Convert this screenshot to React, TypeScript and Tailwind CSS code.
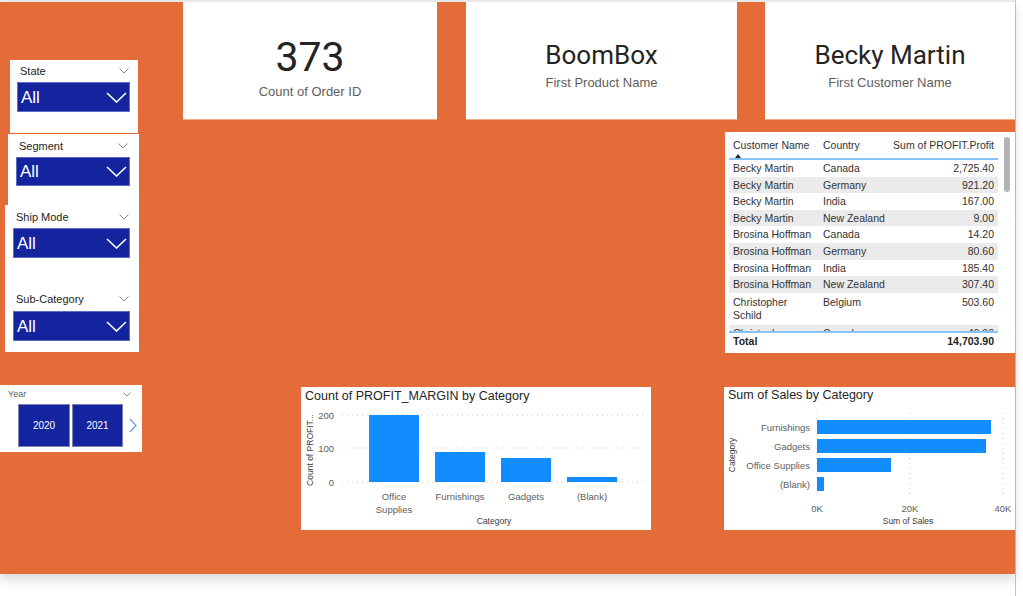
import React from "react";

const sans = "font-['Liberation_Sans',Arial,sans-serif]";
const svgFont = "Liberation Sans, Arial, sans-serif";

const tableRows: { name: string[]; country: string; profit: string }[] = [
  { name: ["Becky Martin"], country: "Canada", profit: "2,725.40" },
  { name: ["Becky Martin"], country: "Germany", profit: "921.20" },
  { name: ["Becky Martin"], country: "India", profit: "167.00" },
  { name: ["Becky Martin"], country: "New Zealand", profit: "9.00" },
  { name: ["Brosina Hoffman"], country: "Canada", profit: "14.20" },
  { name: ["Brosina Hoffman"], country: "Germany", profit: "80.60" },
  { name: ["Brosina Hoffman"], country: "India", profit: "185.40" },
  { name: ["Brosina Hoffman"], country: "New Zealand", profit: "307.40" },
  { name: ["Christopher", "Schild"], country: "Belgium", profit: "503.60" },
  { name: ["Christopher"], country: "Canada", profit: "40.00" },
];

function SmallChevron() {
  return (
    <svg width="10" height="6" viewBox="0 0 10 6">
      <polyline points="0.5,0.5 5,5 9.5,0.5" fill="none" stroke="#8a8886" strokeWidth="1" />
    </svg>
  );
}

// header of a slicer: label on the left, tiny chevron on the right
function SlicerHeader({ label, pr }: { label: string; pr: string }) {
  return (
    <div className={`flex h-[22px] items-center justify-between pl-[3px] ${pr}`}>
      <span className="text-[11px] leading-none text-[#252423]">{label}</span>
      <SmallChevron />
    </div>
  );
}

// dark blue dropdown box showing "All"
function Dropdown({ className = "" }: { className?: string }) {
  return (
    <div
      className={`flex items-center justify-between border border-[#5d6ac6] bg-[#13249e] pl-[3px] pr-[2px] ${className}`}
    >
      <span className="text-[17px] leading-none text-white">All</span>
      <svg width="21" height="11" viewBox="0 0 21 11">
        <polyline points="1,1 10.5,10 20,1" fill="none" stroke="white" strokeWidth="1.6" />
      </svg>
    </div>
  );
}

function Card({
  value,
  label,
  big = false,
  className = "",
}: {
  value: string;
  label: string;
  big?: boolean;
  className?: string;
}) {
  return (
    <div className={`flex flex-col items-center border-b border-[#f2ad8c] bg-white ${big ? "pt-[33px]" : "pt-[37px]"} ${className}`}>
      <div
        className={`font-[Roboto,sans-serif] text-[#252423] ${big ? "text-[41px] leading-[44px]" : "text-[26px] leading-[32px]"}`}
      >
        {value}
      </div>
      <div className={`text-[13px] leading-[18px] text-[#605e5c] ${big ? "mt-[4px]" : "mt-[3px]"}`}>{label}</div>
    </div>
  );
}

function ProfitTable() {
  return (
    <div className="ml-[542px] mt-[12px] flex h-[221px] w-[290px] bg-white pl-[4px] pr-[5px]">
      <div className="flex w-[269px] flex-col text-[10.5px] text-[#333231]">
        {/* header */}
        <div className="flex h-[28px] border-b-2 border-[#86c3f7]">
          <div className="flex w-[90px] flex-col pl-[4px] pt-[6px]">
            <span className="leading-[14px]">Customer Name</span>
            <span className="ml-[2px] mt-[2px] h-0 w-0 border-b-[4px] border-l-[3px] border-r-[3px] border-b-[#252423] border-l-transparent border-r-transparent" />
          </div>
          <div className="w-[74px] pl-[4px] pt-[6px] leading-[14px]">Country</div>
          <div className="w-[105px] pr-[4px] pt-[6px] text-right leading-[14px]">Sum of PROFIT.Profit</div>
        </div>
        {/* rows */}
        <div className="h-[171px] overflow-hidden">
          {tableRows.map((r, i) => (
            <div
              key={i}
              className={`flex leading-[13px] ${i % 2 === 1 ? "bg-[#ebebeb]" : "bg-white"} ${
                r.name.length > 1 ? "h-[32px] pt-[3px]" : "h-[16.6px] pt-[2px]"
              }`}
            >
              <div className="w-[90px] pl-[4px]">
                {r.name.map((n) => (
                  <div key={n}>{n}</div>
                ))}
              </div>
              <div className="w-[74px] pl-[4px]">{r.country}</div>
              <div className="w-[105px] pr-[4px] text-right">{r.profit}</div>
            </div>
          ))}
        </div>
        {/* total */}
        <div className="flex h-[19px] items-center border-t-2 border-[#86c3f7] font-bold text-[#252423]">
          <div className="flex-1 pl-[4px]">Total</div>
          <div className="pr-[4px]">14,703.90</div>
        </div>
      </div>
      <div className="ml-[6px] mt-[5px] h-[55px] w-[6px] rounded-full bg-[#b4b4b4]" />
    </div>
  );
}

function ProfitMarginChart() {
  const bars = [
    { x: 68, top: 10, label: ["Office", "Supplies"] },
    { x: 134, top: 47, label: ["Furnishings"] },
    { x: 200, top: 53, label: ["Gadgets"] },
    { x: 266, top: 72, label: ["(Blank)"] },
  ];
  return (
    <div className="ml-[118px] h-[143px] w-[350px] bg-white">
      <div className="h-[18px] pl-[4px] pt-[1px] text-[12.5px] leading-[16px] text-[#252423]">
        Count of PROFIT_MARGIN by Category
      </div>
      <svg width="350" height="125" viewBox="0 0 350 125">
        {[10, 43, 77].map((y) => (
          <line key={y} x1="41" x2="344" y1={y} y2={y} stroke="#c8c6c4" strokeDasharray="1 4" />
        ))}
        {[
          ["200", 10],
          ["100", 43],
          ["0", 77],
        ].map(([t, y]) => (
          <text key={t} x="33" y={Number(y) + 3.5} textAnchor="end" fontSize="9.5" fill="#605e5c" fontFamily={svgFont}>
            {t}
          </text>
        ))}
        {bars.map((b) => (
          <g key={b.x}>
            <rect x={b.x} y={b.top} width="50" height={77 - b.top} fill="#118dff" />
            {b.label.map((l, j) => (
              <text
                key={l}
                x={b.x + 25}
                y={95 + j * 13}
                textAnchor="middle"
                fontSize="9.5"
                fill="#605e5c"
                fontFamily={svgFont}
              >
                {l}
              </text>
            ))}
          </g>
        ))}
        <text x="193" y="119" textAnchor="middle" fontSize="8.5" fill="#3b3a39" fontFamily={svgFont}>
          Category
        </text>
        <text
          x="0"
          y="0"
          transform="translate(12 45) rotate(-90)"
          textAnchor="middle"
          fontSize="8.5"
          fill="#3b3a39"
          fontFamily={svgFont}
        >
          Count of PROFIT...
        </text>
      </svg>
    </div>
  );
}

function SalesChart() {
  const bars = [
    { label: "Furnishings", w: 174, y: 15 },
    { label: "Gadgets", w: 169, y: 34 },
    { label: "Office Supplies", w: 74, y: 53 },
    { label: "(Blank)", w: 7, y: 72 },
  ];
  return (
    <div className="ml-[73px] h-[143px] w-[291px] bg-white">
      <div className="h-[18px] pl-[4px] text-[12.5px] leading-[16px] text-[#252423]">Sum of Sales by Category</div>
      <svg width="291" height="125" viewBox="0 0 291 125">
        {[93, 186, 279].map((x) => (
          <line key={x} x1={x} x2={x} y1="8" y2="90" stroke="#c8c6c4" strokeDasharray="1 4" />
        ))}
        {bars.map((b) => (
          <g key={b.label}>
            <rect x="93" y={b.y} width={b.w} height="14" fill="#118dff" />
            <text x="86" y={b.y + 10.5} textAnchor="end" fontSize="9.5" fill="#605e5c" fontFamily={svgFont}>
              {b.label}
            </text>
          </g>
        ))}
        {[
          ["0K", 93],
          ["20K", 186],
          ["40K", 279],
        ].map(([t, x]) => (
          <text key={t} x={x} y="107" textAnchor="middle" fontSize="9.5" fill="#605e5c" fontFamily={svgFont}>
            {t}
          </text>
        ))}
        <text x="184" y="119" textAnchor="middle" fontSize="8.5" fill="#3b3a39" fontFamily={svgFont}>
          Sum of Sales
        </text>
        <text
          x="0"
          y="0"
          transform="translate(11 50) rotate(-90)"
          textAnchor="middle"
          fontSize="8.5"
          fill="#3b3a39"
          fontFamily={svgFont}
        >
          Category
        </text>
      </svg>
    </div>
  );
}

export default function App() {
  return (
    <div className={`flex h-[596px] w-[1023px] overflow-hidden bg-white ${sans}`}>
      <div className="flex w-[1016px] flex-col border-r border-[#c4c4c4]">
        <div className="h-[2px] bg-[#ececec]" />
        <div className="flex h-[572px] w-[1015px] bg-[#e46c38] shadow-[0_6px_10px_rgba(0,0,0,0.14)]">
          {/* slicers column */}
          <div className="flex w-[183px] flex-col pt-[58px]">
            <div className="ml-[10px] h-[73px] w-[128px] bg-white pl-[7px]">
              <SlicerHeader label="State" pr="pr-[9px]" />
              <Dropdown className="h-[30px] w-[113px]" />
            </div>
            <div className="ml-[8px] mt-[1px] h-[71px] w-[131px] bg-white pl-[8px] pt-[1px]">
              <SlicerHeader label="Segment" pr="pr-[11px]" />
              <Dropdown className="h-[29px] w-[114px]" />
            </div>
            <div className="ml-[5px] h-[147px] w-[134px] bg-white pl-[8px] pt-[1px]">
              <SlicerHeader label="Ship Mode" pr="pr-[10px]" />
              <Dropdown className="h-[30px] w-[117px]" />
              <div className="mt-[30px]">
                <SlicerHeader label="Sub-Category" pr="pr-[10px]" />
              </div>
              <Dropdown className="mt-[1px] h-[30px] w-[117px]" />
            </div>
            <div className="mt-[33px] h-[67px] w-[142px] bg-white">
              <div className="flex h-[19px] items-center justify-between pl-[8px] pr-[11px]">
                <span className="text-[9px] leading-none text-[#605e5c]">Year</span>
                <svg width="8" height="5" viewBox="0 0 8 5">
                  <polyline points="0.5,0.5 4,4 7.5,0.5" fill="none" stroke="#8a8886" strokeWidth="1" />
                </svg>
              </div>
              <div className="flex items-center pl-[18px]">
                <div className="flex h-[43px] w-[52px] items-center justify-center border border-[#7c82ad] bg-[#13249e] text-[10px] text-white">
                  2020
                </div>
                <div className="ml-[2px] flex h-[43px] w-[51px] items-center justify-center border border-[#7c82ad] bg-[#13249e] text-[10px] text-white">
                  2021
                </div>
                <svg className="ml-[6px]" width="8" height="15" viewBox="0 0 8 15">
                  <polyline points="1,1 7,7.5 1,14" fill="none" stroke="#6f9fd8" strokeWidth="1.3" />
                </svg>
              </div>
            </div>
          </div>

          {/* visuals area */}
          <div className="flex flex-1 flex-col">
            <div className="flex h-[118px]">
              <Card value="373" label="Count of Order ID" big className="w-[254px]" />
              <Card value="BoomBox" label="First Product Name" className="ml-[29px] w-[271px]" />
              <Card value="Becky Martin" label="First Customer Name" className="ml-[28px] w-[250px]" />
            </div>
            <ProfitTable />
            <div className="mt-[34px] flex">
              <ProfitMarginChart />
              <SalesChart />
            </div>
          </div>
        </div>
      </div>
    </div>
  );
}
